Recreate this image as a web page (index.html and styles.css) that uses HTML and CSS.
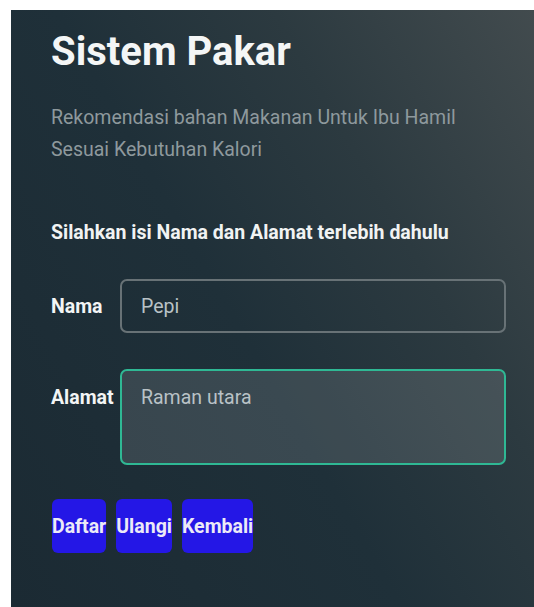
FILE: index.html
```html
<!DOCTYPE html>
<html lang="id">
<head>
<meta charset="utf-8">
<title>Sistem Pakar</title>
<link rel="stylesheet" href="styles.css">
</head>
<body>
<main class="panel">
  <h1 class="title">Sistem Pakar</h1>
  <p class="subtitle">Rekomendasi bahan Makanan Untuk Ibu Hamil<br>Sesuai Kebutuhan Kalori</p>
  <h2 class="lead">Silahkan isi Nama dan Alamat terlebih dahulu</h2>
  <form class="form">
    <div class="row">
      <label class="label" for="nama">Nama</label>
      <input class="field" id="nama" type="text" value="Pepi">
    </div>
    <div class="row row-top">
      <label class="label label-top" for="alamat">Alamat</label>
      <textarea class="field area" id="alamat">Raman utara</textarea>
    </div>
    <div class="actions">
      <button class="btn" type="submit">Daftar</button>
      <button class="btn" type="reset">Ulangi</button>
      <button class="btn" type="button">Kembali</button>
    </div>
  </form>
</main>
</body>
</html>
```

FILE: styles.css
```css
html, body {
  margin: 0;
  background: #ffffff;
}

body {
  padding: 10px 0 0 11px;
  font-family: Roboto, "Liberation Sans", sans-serif;
}

.panel {
  box-sizing: border-box;
  height: 597px;
  padding: 18px 28px 0 40px;
  background: linear-gradient(60deg, #1b2a33 0%, #1f3039 45%, #2c3a40 70%, #424b4e 100%);
  color: #ffffff;
  overflow: hidden;
}

.title {
  margin: 0;
  font-size: 40px;
  font-weight: 700;
  line-height: 47px;
  color: #f4f6f6;
}

.subtitle {
  margin: 27px 0 0;
  font-size: 19.5px;
  line-height: 32px;
  color: #8e999d;
}

.lead {
  margin: 55px 0 0;
  font-size: 19.5px;
  font-weight: 700;
  line-height: 24px;
  color: #f1f3f3;
}

.form {
  margin-top: 34px;
}

.row {
  display: flex;
  align-items: center;
}

.row + .row {
  margin-top: 36px;
}

.row-top {
  align-items: flex-start;
}

.label {
  width: 69px;
  flex: none;
  font-size: 19.5px;
  font-weight: 700;
  color: #f3f5f5;
}

.label-top {
  padding-top: 17px;
}

.field {
  box-sizing: border-box;
  flex: 1;
  height: 54px;
  margin: 0;
  padding: 0 19px;
  border: 2px solid #687276;
  border-radius: 7px;
  background: transparent;
  font-family: inherit;
  font-size: 19.5px;
  color: #b9c2c6;
  outline: none;
}

.area {
  height: 96px;
  padding: 15px 19px;
  border-color: #2fb894;
  background: rgba(255, 255, 255, 0.12);
  resize: none;
  line-height: 23px;
}

.actions {
  display: flex;
  gap: 10px;
  margin-top: 34px;
  padding-left: 1px;
}

.btn {
  height: 54px;
  margin: 0;
  padding: 0;
  border: none;
  border-radius: 6px;
  background: #2417e6;
  font-family: inherit;
  font-size: 19.5px;
  font-weight: 700;
  color: #eceaf7;
}
```
